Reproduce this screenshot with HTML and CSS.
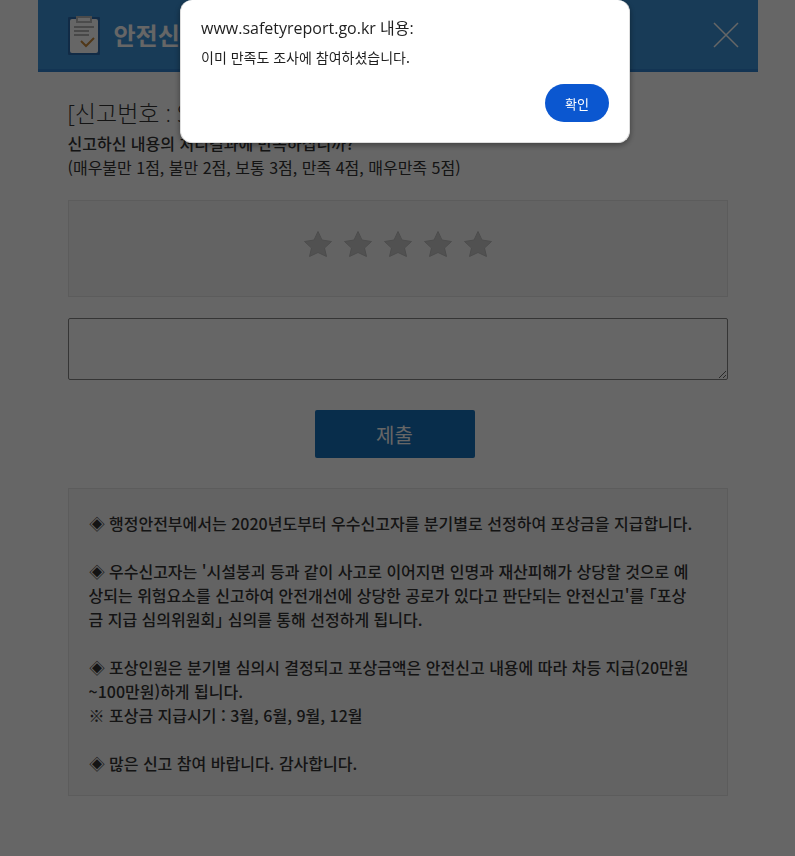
FILE: index.html
```html
<!DOCTYPE html>
<html lang="ko">
<head>
    <meta charset="UTF-8">
    <meta name="viewport" content="width=device-width, initial-scale=1.0">
    <title>안전신고 만족도 조사</title>
    <link rel="stylesheet" href="styles.css">
</head>
<body>
    <div class="popup">
        <header class="popup-header">
            <svg class="logo" viewBox="0 0 32 40" width="32" height="40" aria-hidden="true">
                <rect x="0" y="2" width="32" height="38" rx="1" fill="#2b6db0"/>
                <rect x="2" y="4" width="28" height="34" rx="2" fill="#fff"/>
                <rect x="9" y="2" width="14" height="5" fill="#fff" stroke="#bcbcbc" stroke-width="2"/>
                <path d="M6 12H26M6 16H21M6 20H21" stroke="#b4b4b4" stroke-width="2"/>
                <path d="M13 26l5 5 8-8" fill="none" stroke="#c98a3c" stroke-width="2"/>
            </svg>
            <h1>안전신고</h1>
            <button type="button" class="close" aria-label="닫기">
                <svg viewBox="0 0 24 24" width="24" height="24"><path d="M0 0L24 24M24 0L0 24" stroke="#fff" stroke-width="1.500"/></svg>
            </button>
        </header>

        <form class="content">
            <h2>[신고번호 : SPP]</h2>
            <label class="question" for="opinion">신고하신 내용의 처리결과에 만족하십니까?</label>
            <p class="guide">(매우불만 1점, 불만 2점, 보통 3점, 만족 4점, 매우만족 5점)</p>

            <svg class="symbols" aria-hidden="true">
                <symbol id="star" viewBox="0 0 28 26">
                    <path d="M14 0.500l4 8.500 9.500 1.500-7 6.500 2 8.500L14 21.500l-8.500 4 2-8.500-7-6.500L10 9z" fill="#cbcbcb" stroke="#bebebe" stroke-linejoin="round"/>
                </symbol>
            </svg>
            <div class="box stars">
                <button type="button" aria-label="1점"><svg width="28" height="26"><use href="#star"/></svg></button>
                <button type="button" aria-label="2점"><svg width="28" height="26"><use href="#star"/></svg></button>
                <button type="button" aria-label="3점"><svg width="28" height="26"><use href="#star"/></svg></button>
                <button type="button" aria-label="4점"><svg width="28" height="26"><use href="#star"/></svg></button>
                <button type="button" aria-label="5점"><svg width="28" height="26"><use href="#star"/></svg></button>
            </div>

            <textarea id="opinion"></textarea>

            <div class="actions">
                <button type="submit" class="submit">제출</button>
            </div>

            <div class="box notice">
                <p>◈ 행정안전부에서는 2020년도부터 우수신고자를 분기별로 선정하여 포상금을 지급합니다.</p>
                <p>◈ 우수신고자는 '시설붕괴 등과 같이 사고로 이어지면 인명과 재산피해가 상당할 것으로 예<br>상되는 위험요소를 신고하여 안전개선에 상당한 공로가 있다고 판단되는 안전신고'를 「포상<br>금 지급 심의위원회」 심의를 통해 선정하게 됩니다.</p>
                <p>◈ 포상인원은 분기별 심의시 결정되고 포상금액은 안전신고 내용에 따라 차등 지급(20만원<br>~100만원)하게 됩니다.<br>※ 포상금 지급시기 : 3월, 6월, 9월, 12월</p>
                <p>◈ 많은 신고 참여 바랍니다. 감사합니다.</p>
            </div>
        </form>
    </div>

    <div class="dim">
        <dialog class="alert" open aria-labelledby="alert-title">
            <h3 id="alert-title">www.safetyreport.go.kr 내용:</h3>
            <p>이미 만족도 조사에 참여하셨습니다.</p>
            <button type="button">확인</button>
        </dialog>
    </div>
</body>
</html>
```
FILE: styles.css
```css
* {
    box-sizing: border-box;
}

body {
    margin: 0;
    font-family: "Noto Sans CJK KR", sans-serif;
    font-size: 16px;
    line-height: 24px;
    color: #333;
    background: #fff;
}

h1, h2, h3, p {
    margin: 0;
}

button {
    padding: 0;
    border: 0;
    background: none;
    font-family: inherit;
    cursor: pointer;
}

svg {
    display: block;
    overflow: visible;
}

.popup {
    max-width: 720px;
    margin: 0 auto;
}

.popup-header {
    display: flex;
    align-items: center;
    height: 72px;
    padding: 0 20px 0 30px;
    background: #3c94da;
    border-bottom: 3px solid #3082cf;
}

.popup-header h1 {
    margin-left: 14px;
    font-size: 24px;
    line-height: 36px;
    color: #fff;
}

.close {
    margin-left: auto;
}

.content {
    padding: 25px 30px 60px;
}

.content h2 {
    margin-bottom: 2px;
    font-family: "Open Sans", "Noto Sans CJK KR", sans-serif;
    font-size: 23px;
    font-weight: 300;
    line-height: 32px;
}

.question {
    display: block;
    font-weight: 500;
}

.symbols {
    position: absolute;
    width: 0;
    height: 0;
}

.box {
    background: #f8f8f8;
    border: 1px solid #e5e5e5;
}

.stars {
    display: flex;
    justify-content: center;
    gap: 12px;
    margin-top: 21px;
    padding: 30px 0 39px;
}

textarea {
    display: block;
    width: 100%;
    height: 62px;
    margin-top: 21px;
    border: 1px solid #858585;
    border-radius: 2px;
    background: #fff;
    font: inherit;
}

.actions {
    padding: 30px 6px 30px 0;
}

.submit {
    display: block;
    width: 160px;
    height: 48px;
    margin: 0 auto;
    border-radius: 2px;
    background: #1470bb;
    color: #fff;
    font-size: 20px;
}

.notice {
    padding: 22px 15px 20px 20px;
    font-weight: 500;
    font-feature-settings: "halt";
}

.notice p + p {
    margin-top: 24px;
}

/* the browser dialog is centred on the window with its scrollbar */
.dim {
    position: fixed;
    inset: 0;
    padding-left: 15px;
    background: rgba(0, 0, 0, 0.6);
}

.alert {
    position: static;
    display: flex;
    flex-direction: column;
    width: 450px;
    height: 143px;
    margin: 0 auto;
    padding: 16px 20px 20px;
    border: 1px solid #ddd;
    border-top: 0;
    border-radius: 12px;
    background: #fff;
    color: #1f1f1f;
    box-shadow: 0 2px 6px rgba(0, 0, 0, 0.4);
}

.alert h3 {
    font-family: "Open Sans", "Noto Sans CJK KR", sans-serif;
    font-size: 16px;
    font-weight: 400;
}

.alert p {
    margin-top: 5px;
    font-size: 14px;
}

.alert button {
    align-self: flex-end;
    width: 64px;
    height: 38px;
    margin-top: auto;
    border-radius: 19px;
    background: #0b57d0;
    color: #fff;
    font-size: 13px;
}
```
